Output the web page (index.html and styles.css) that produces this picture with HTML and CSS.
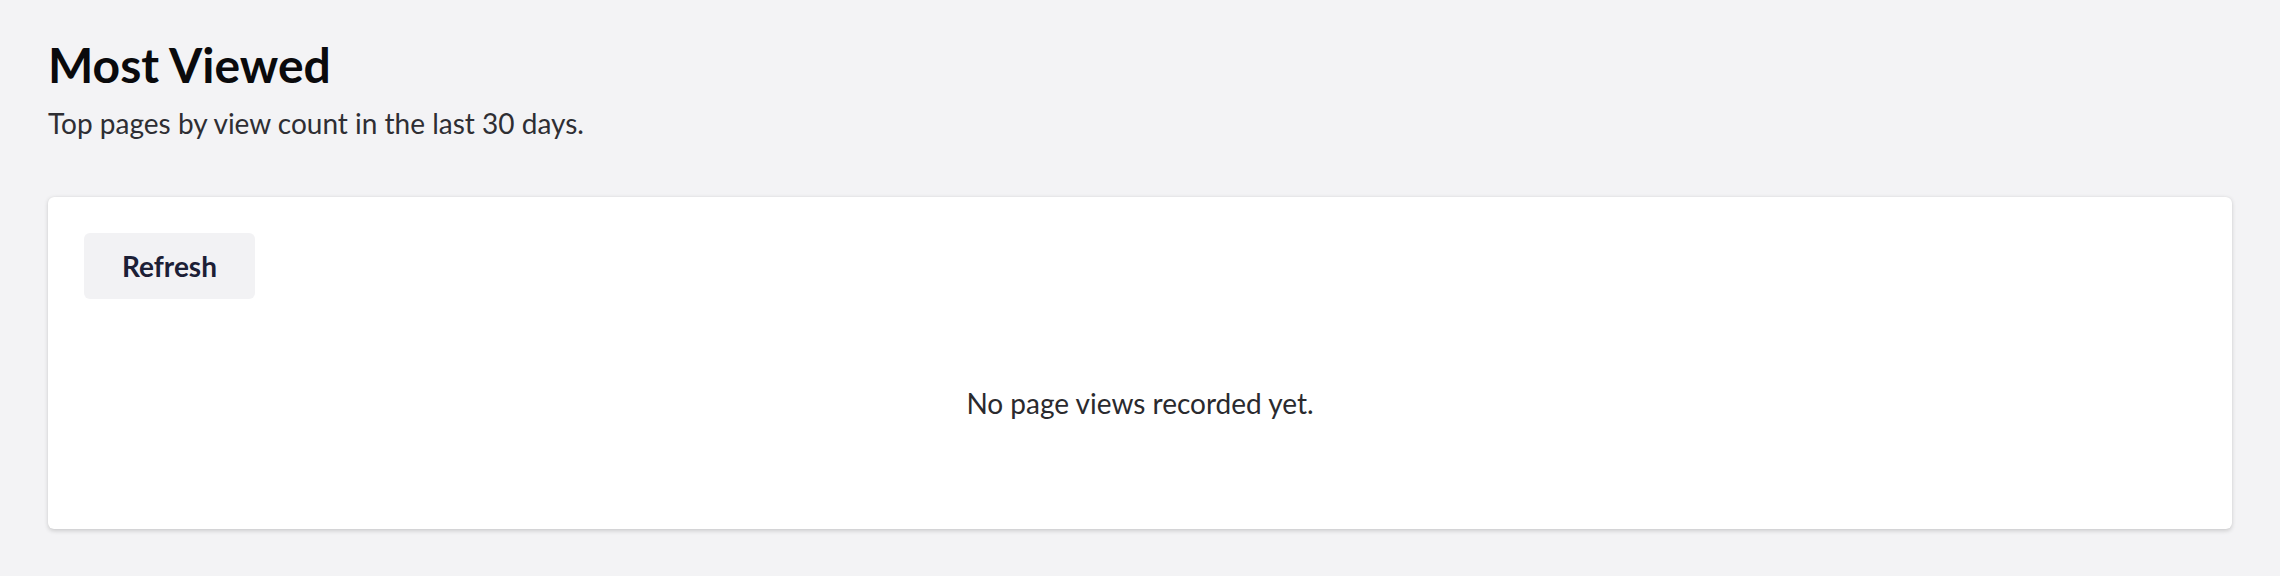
FILE: index.html
```html
<!DOCTYPE html>
<html lang="en">
<head>
<meta charset="utf-8">
<title>Most Viewed</title>
<link rel="stylesheet" href="styles.css">
</head>
<body>
<main class="page">
  <header class="page-header">
    <h1 class="page-title">Most Viewed</h1>
    <p class="page-subtitle">Top pages by view count in the last 30 days.</p>
  </header>
  <section class="card">
    <div class="toolbar">
      <button class="btn" type="button">Refresh</button>
    </div>
    <div class="empty">No page views recorded yet.</div>
  </section>
</main>
</body>
</html>
```
FILE: styles.css
```css
* { box-sizing: border-box; }
html, body {
  margin: 0;
  height: 100%;
}
body {
  background: #f3f3f5;
  font-family: Lato, "Noto Sans", sans-serif;
  color: #2a2a2e;
}
.page {
  padding: 36px 48px;
}
.page-header {
  margin-bottom: 53px;
}
.page-title {
  margin: 0;
  font-size: 48px;
  font-weight: 700;
  line-height: 57.6px;
  color: #0a0a0c;
}
.page-subtitle {
  margin: 8px 0 0;
  font-size: 28px;
  line-height: 42px;
  color: #2e2e33;
}
.card {
  background: #ffffff;
  border-radius: 6px;
  box-shadow: 0 1.5px 4px rgba(0, 0, 0, 0.16), 0 0 1px rgba(0, 0, 0, 0.08);
  padding: 36px;
}
.toolbar {
  display: flex;
  gap: 12px;
  margin-bottom: 12px;
}
.btn {
  height: 66px;
  padding: 0 38px;
  border: 0;
  border-radius: 6px;
  background: #f2f2f4;
  color: #1c2036;
  font-family: inherit;
  font-size: 28px;
  font-weight: 700;
  cursor: pointer;
}
.empty {
  padding: 71px 0 69px;
  text-align: center;
  font-size: 28px;
  line-height: 42px;
  color: #2a2a2e;
}
```
